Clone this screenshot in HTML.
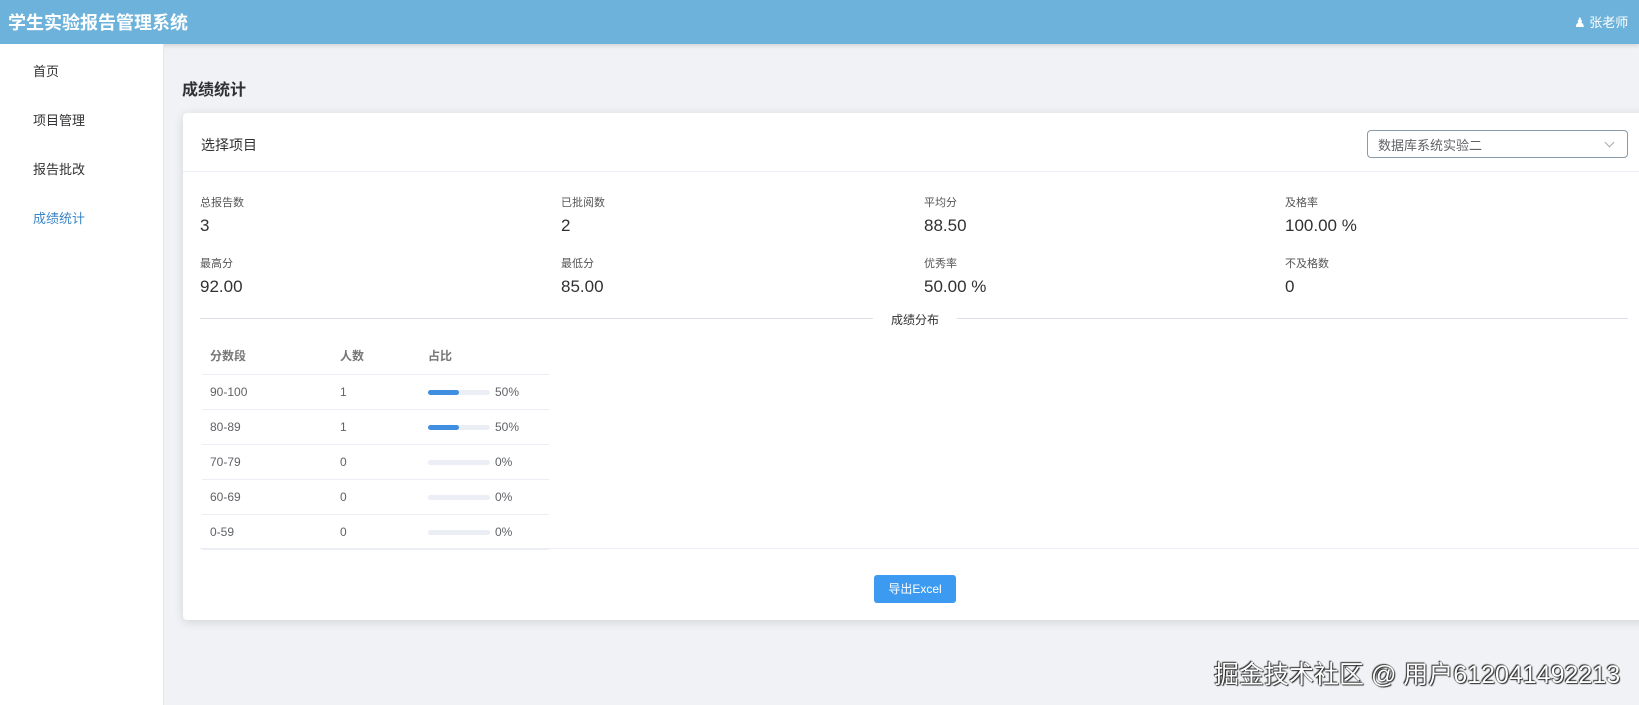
<!DOCTYPE html>
<html><head><meta charset="utf-8"><style>
*{margin:0;padding:0;box-sizing:border-box}
body{width:1639px;height:705px;overflow:hidden;background:#f0f2f5;font-family:"Liberation Sans","Noto Sans CJK SC",sans-serif;color:#303133;position:relative}
.hdr{position:absolute;left:0;top:0;width:1639px;height:44px;background:#6cb2da;box-shadow:0 2px 4px rgba(0,0,0,.12)}
.hdr .t{position:absolute;left:8px;top:9px;font-size:18px;font-weight:bold;color:#fff}
.hdr .u{position:absolute;left:1574px;top:12px;font-size:13px;color:#fff}
.side{position:absolute;left:0;top:44px;width:164px;height:661px;background:#fff;border-right:1px solid #e6e6e6}
.side div{position:absolute;left:33px;font-size:13px;color:#303133}
.ttl{position:absolute;left:182px;top:76px;font-size:16px;font-weight:bold}
.card{position:absolute;left:183px;top:113px;width:1470px;height:507px;background:#fff;border-radius:4px;box-shadow:0 2px 10px rgba(0,0,0,.12)}
.ch{position:absolute;left:0;top:0;width:100%;height:59px;border-bottom:1px solid #ebeef5}
.ch .l{position:absolute;left:18px;top:22px;font-size:14px}
.sel{position:absolute;left:1184px;top:17px;width:261px;height:28px;border:1px solid #8a9aa6;border-radius:4px;font-size:13px;color:#606266;padding:4px 10px}
.sel:after{content:"";position:absolute;right:14px;top:8px;width:6px;height:6px;border-right:1px solid #aaa;border-bottom:1px solid #aaa;transform:rotate(45deg)}
.st{position:absolute}
.st .a{font-size:11px;color:#555}
.st .b{font-size:17px;color:#303133;margin-top:6px}
.div{position:absolute;left:17px;top:205px;width:1428px;border-top:1px solid #dcdfe6}
.divt{position:absolute;left:690px;top:198px;background:#fff;padding:0 18px;font-size:12px;color:#303133}
table{position:absolute;left:19px;top:225px;width:347px;border-collapse:collapse;font-size:12px;color:#606266}
td,th{height:35px;border-bottom:1px solid #ebeef5;text-align:left;padding-left:8px;font-weight:normal}
th{color:#777;font-weight:bold;height:36px}
.bar{display:inline-block;width:62px;height:5px;background:#ebeef5;border-radius:3px;vertical-align:middle;margin-right:5px;position:relative}
.bar i{position:absolute;left:0;top:0;height:5px;width:31px;background:#3f8ee0;border-radius:3px}
.line{position:absolute;left:17px;top:435px;width:1446px;border-top:1px solid #ebeef5}
.btn{position:absolute;left:691px;top:462px;width:82px;height:28px;background:#3c9af0;border-radius:3px;color:#fff;font-size:12px;text-align:center;line-height:28px}
.wm{position:absolute;left:1214px;top:655px;font-size:25px;color:#fff;text-shadow:0 0 1px #000,1px 1px 1px #333,-1px -1px 1px #333;white-space:nowrap}
</style></head><body>
<div class="hdr"><div class="t">学生实验报告管理系统</div><div class="u">&#9823; 张老师</div></div>
<div class="side"><div style="top:17px">首页</div><div style="top:66px">项目管理</div><div style="top:115px">报告批改</div><div style="top:164px;color:#3a85c8">成绩统计</div></div>
<div class="ttl">成绩统计</div>
<div class="card">
<div class="ch"><div class="l">选择项目</div><div class="sel">数据库系统实验二</div></div>
<div class="st" style="left:17px;top:81px"><div class="a">总报告数</div><div class="b">3</div></div>
<div class="st" style="left:378px;top:81px"><div class="a">已批阅数</div><div class="b">2</div></div>
<div class="st" style="left:741px;top:81px"><div class="a">平均分</div><div class="b">88.50</div></div>
<div class="st" style="left:1102px;top:81px"><div class="a">及格率</div><div class="b">100.00 %</div></div>
<div class="st" style="left:17px;top:142px"><div class="a">最高分</div><div class="b">92.00</div></div>
<div class="st" style="left:378px;top:142px"><div class="a">最低分</div><div class="b">85.00</div></div>
<div class="st" style="left:741px;top:142px"><div class="a">优秀率</div><div class="b">50.00 %</div></div>
<div class="st" style="left:1102px;top:142px"><div class="a">不及格数</div><div class="b">0</div></div>
<div class="div"></div><div class="divt">成绩分布</div>
<table>
<tr><th style="width:130px">分数段</th><th style="width:88px">人数</th><th>占比</th></tr>
<tr><td>90-100</td><td>1</td><td><span class="bar"><i></i></span>50%</td></tr>
<tr><td>80-89</td><td>1</td><td><span class="bar"><i></i></span>50%</td></tr>
<tr><td>70-79</td><td>0</td><td><span class="bar"></span>0%</td></tr>
<tr><td>60-69</td><td>0</td><td><span class="bar"></span>0%</td></tr>
<tr><td>0-59</td><td>0</td><td><span class="bar"></span>0%</td></tr>
</table>
<div class="line"></div>
<div class="btn">导出Excel</div>
</div>
<div class="wm">掘金技术社区 @ 用户612041492213</div>
</body></html>
